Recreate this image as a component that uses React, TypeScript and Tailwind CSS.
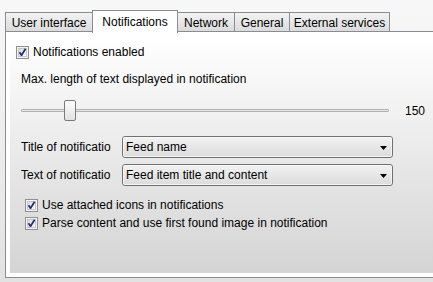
import React from "react";

const font = { fontFamily: '"Segoe UI", "Liberation Sans", Arial, sans-serif' };

function Check({ className = "" }: { className?: string }) {
  return (
    <div className={"relative w-[13px] h-[13px] border border-[#8f8f8f] bg-[#f4f4f4] shrink-0 " + className}>
      <div className="absolute inset-[1px] border border-[#c6c6c6] bg-gradient-to-br from-[#dcdcdc] to-[#fbfbfb]" />
      <svg className="absolute inset-0" width="11" height="11" viewBox="0 0 11 11">
        <path d="M2.5 5.2 L4.5 8.2 L8.6 1.8" fill="none" stroke="#1c2a78" strokeWidth="1.7" strokeLinejoin="round" />
      </svg>
    </div>
  );
}

function Combo({ text }: { text: string }) {
  return (
    <div className="relative w-[271px] h-[22px] rounded-[3px] border border-[#707070] bg-gradient-to-b from-[#f2f2f2] to-[#dcdcdc] flex items-center pl-[3px] text-[12px] text-black">
      <div className="absolute inset-0 rounded-[2px] border border-[#fcfcfc] opacity-70" />
      <span className="relative">{text}</span>
      <svg className="absolute right-[5px] top-[9px]" width="7" height="4" viewBox="0 0 7 4">
        <path d="M0 0 H7 L3.5 4 Z" fill="#000" />
      </svg>
    </div>
  );
}

function Tab({ label, w, selected }: { label: string; w: number; selected?: boolean }) {
  return (
    <div
      style={{ width: w }}
      className={
        "flex items-center justify-center text-[12px] text-black border border-[#898c95] -mr-[1px] " +
        (selected
          ? "h-[23px] bg-white border-b-0 relative z-10 -mb-[1px] pb-[1px]"
          : "h-[20px] bg-gradient-to-b from-[#f3f3f3] to-[#dadada] border-b-0")
      }
    >
      {label}
    </div>
  );
}

export default function App() {
  return (
    <div style={font} className="w-[433px] h-[282px] overflow-hidden bg-gradient-to-b from-[#f8f8f8] to-[#e2e2e2] flex flex-col">
      <div className="pt-[9px] pl-[5px] flex items-end h-[32px]">
        <Tab label="User interface" w={88} />
        <Tab label="Notifications" w={86} selected />
        <Tab label="Network" w={58} />
        <Tab label="General" w={56} />
        <Tab label="External services" w={101} />
      </div>
      <div className="ml-[5px] h-[247px] w-[440px] border border-[#898c95] bg-white p-[4px] -mt-[1px]">
        <div className="h-full bg-gradient-to-b from-[#ffffff] to-[#d4d4d4] text-[12px] text-black">
          <div className="flex items-center gap-[4px] pl-[6px] pt-[10px]">
            <Check />
            <span className="leading-[13px]">Notifications enabled</span>
          </div>
          <div className="pl-[11px] mt-[12px] leading-[16px]">Max. length of text displayed in notification</div>
          <div className="flex items-center pl-[11px] mt-[13px] h-[21px]">
            <div className="relative w-[368px] h-[21px]">
              <div className="absolute left-0 right-0 top-[9px] h-[3px] rounded-[1px] border border-[#b0b0b0] bg-[#e7eaea]" />
              <div className="absolute left-[43px] top-0 w-[12px] h-[21px] rounded-[2px] border border-[#7a7a7a] bg-gradient-to-b from-[#fdfdfd] to-[#e2e2e2]" />
            </div>
            <span className="ml-[16px]">150</span>
          </div>
          <div className="flex items-center pl-[11px] mt-[15px]">
            <div className="w-[90px] overflow-hidden whitespace-nowrap">Title of notification</div>
            <div className="ml-[11px]"><Combo text="Feed name" /></div>
          </div>
          <div className="flex items-center pl-[11px] mt-[6px]">
            <div className="w-[90px] overflow-hidden whitespace-nowrap">Text of notification</div>
            <div className="ml-[11px]"><Combo text="Feed item title and content" /></div>
          </div>
          <div className="flex items-center gap-[4px] pl-[15px] mt-[13px]">
            <Check />
            <span className="leading-[13px]">Use attached icons in notifications</span>
          </div>
          <div className="flex items-center gap-[4px] pl-[15px] mt-[5px]">
            <Check />
            <span className="leading-[13px]">Parse content and use first found image in notification</span>
          </div>
        </div>
      </div>
    </div>
  );
}
